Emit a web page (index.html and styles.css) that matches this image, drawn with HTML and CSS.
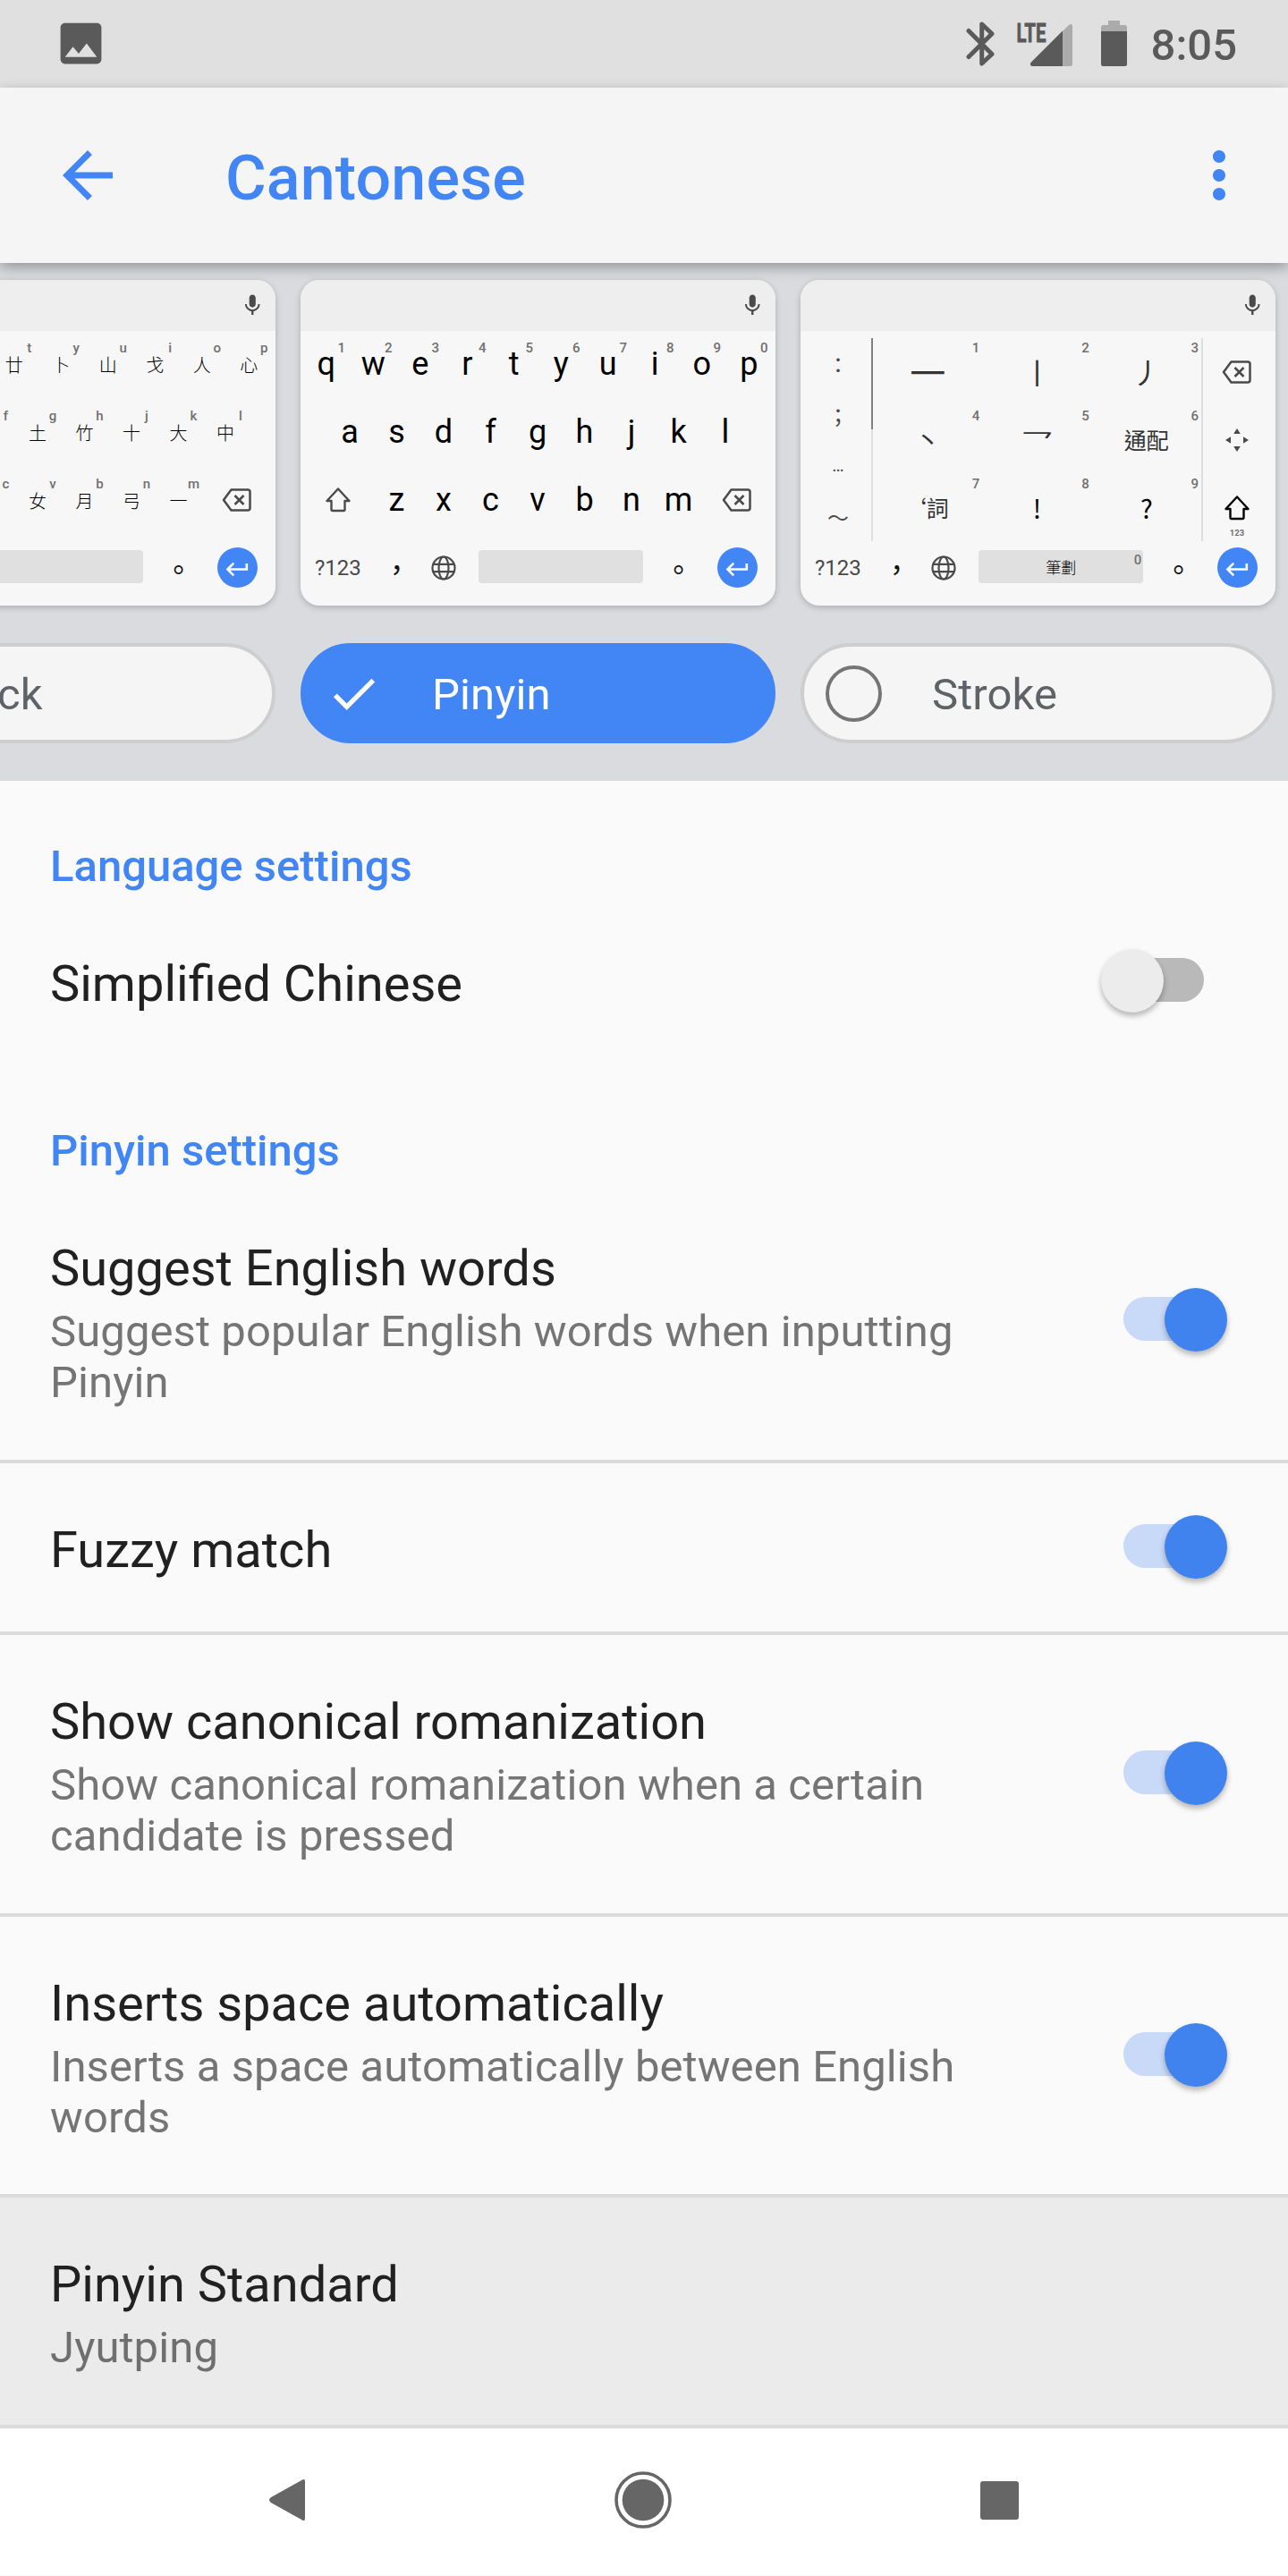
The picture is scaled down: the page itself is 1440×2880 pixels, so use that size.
FILE: index.html
```html
<!DOCTYPE html>
<html lang="en">
<head>
<meta charset="utf-8">
<title>Cantonese</title>
<link rel="stylesheet" href="styles.css">
</head>
<body>
<svg class="defs" width="0" height="0" aria-hidden="true">
  <symbol id="mic" viewBox="0 0 24 24"><path d="M12 14c1.66 0 2.99-1.34 2.99-3L15 5c0-1.66-1.34-3-3-3S9 3.340 9 5v6c0 1.660 1.340 3 3 3zm5.300-3c0 3-2.540 5.100-5.300 5.100S6.700 14 6.700 11H5c0 3.410 2.720 6.230 6 6.720V21h2v-3.280c3.280-.480 6-3.300 6-6.720h-1.700z"/></symbol>
  <symbol id="backspace" viewBox="0 0 34 28"><path d="M10.500 2.500H29a2.500 2.500 0 0 1 2.500 2.500v18a2.500 2.500 0 0 1-2.500 2.500H10.500L2 14z M14.500 9l10 10M24.500 9l-10 10" fill="none" stroke="currentColor" stroke-width="2.500" stroke-linejoin="round"/></symbol>
  <symbol id="shift" viewBox="0 0 30 29"><path d="M15 2.500L27.500 16H22.500V25.500a1.500 1.500 0 0 1-1.500 1.500H9a1.500 1.500 0 0 1-1.500-1.500V16H2.500z" fill="none" stroke="currentColor" stroke-width="2.400" stroke-linejoin="round"/></symbol>
  <symbol id="globe" viewBox="0 0 28 28"><g fill="none" stroke="currentColor" stroke-width="2.200"><circle cx="14" cy="14" r="12.500"/><ellipse cx="14" cy="14" rx="5.500" ry="12.500"/><path d="M2.500 9.800h23M2.500 18.200h23"/></g></symbol>
  <symbol id="enter" viewBox="0 0 24 24"><path d="M19 7v4H5.830l3.580-3.590L8 6l-6 6 6 6 1.410-1.410L5.830 13H21V7z"/></symbol>
</svg>

<header class="status">
  <svg class="status-image" viewBox="0 0 24 24"><path d="M21 19V5c0-1.100-.900-2-2-2H5c-1.100 0-2 .900-2 2v14c0 1.100.900 2 2 2h14c1.100 0 2-.900 2-2zM8.500 13.500l2.500 3.010L14.500 12l4.500 6H5l3.500-4.500z"/></svg>
  <div class="status-right">
    <svg width="32" height="98" viewBox="1080 0 32 98"><path d="M1083 34.500L1109 60.500L1097.700 71V27L1109 37.700L1083 63.500" fill="none" stroke="#5a5a5a" stroke-width="5" stroke-linejoin="round" stroke-linecap="round"/></svg>
    <svg width="64" height="98" viewBox="1136 0 64 98">
      <path d="M1155 74a2.500 2.500 0 0 1-2-4.500L1195 28q4-2.500 4 2V71.500a2.500 2.500 0 0 1-2.500 2.500z" fill="#ababab"/>
      <path d="M1155 74a2.500 2.500 0 0 1-2-4.500L1188 34.500V74z" fill="#5a5a5a"/>
      <text x="1136.500" y="46.500" class="lte" textLength="33" lengthAdjust="spacingAndGlyphs">LTE</text>
    </svg>
    <svg width="29" height="98" viewBox="1231 0 29 98"><path d="M1231 36V30.500a2.500 2.500 0 0 1 2.500-2.500H1239V23h13v5h5.500a2.500 2.500 0 0 1 2.500 2.500V36z" fill="#ababab"/><path d="M1231 35h29V71.500a2.500 2.500 0 0 1-2.500 2.500h-24a2.500 2.500 0 0 1-2.500-2.500z" fill="#5a5a5a"/></svg>
    <span class="clock">8:05</span>
  </div>
</header>

<div class="appbar">
  <svg class="nav-icon" viewBox="0 0 24 24"><path d="M20 11H7.830l5.590-5.590L12 4l-8 8 8 8 1.410-1.410L7.830 13H20v-2z"/></svg>
  <h1>Cantonese</h1>
  <svg class="nav-icon" viewBox="0 0 24 24"><path d="M12 8c1.100 0 2-.900 2-2s-.900-2-2-2-2 .900-2 2 .900 2 2 2zm0 2c-1.100 0-2 .900-2 2s.900 2 2 2 2-.900 2-2-.900-2-2-2zm0 6c-1.100 0-2 .900-2 2s.900 2 2 2 2-.900 2-2-.900-2-2-2z"/></svg>
</div>

<section class="layouts">
  <div class="strip">
    <div class="option">
      <div class="keyboard han">
        <div class="kb-top"><svg class="mic"><use href="#mic"/></svg></div>
        <div class="kb-row"><span class="key"></span><span class="key"></span><span class="key"></span><span class="key"></span><span class="key">廿<i>t</i></span><span class="key">卜<i>y</i></span><span class="key">山<i>u</i></span><span class="key">戈<i>i</i></span><span class="key">人<i>o</i></span><span class="key">心<i>p</i></span></div>
        <div class="kb-row"><span class="key"></span><span class="key"></span><span class="key"></span><span class="key"><i>f</i></span><span class="key">土<i>g</i></span><span class="key">竹<i>h</i></span><span class="key">十<i>j</i></span><span class="key">大<i>k</i></span><span class="key">中<i>l</i></span></div>
        <div class="kb-row"><span class="key wide"></span><span class="key"></span><span class="key"></span><span class="key"><i>c</i></span><span class="key">女<i>v</i></span><span class="key">月<i>b</i></span><span class="key">弓<i>n</i></span><span class="key">一<i>m</i></span><span class="key wide"><svg class="backspace"><use href="#backspace"/></svg></span></div>
        <div class="kb-row bottom"><span class="key wide"></span><span class="key"></span><span class="key"></span><span class="space"></span><span class="key punct">。</span><span class="key wide"><span class="enter"><svg><use href="#enter"/></svg></span></span></div>
      </div>
      <div class="chip"><span class="radio"></span>Quick</div>
    </div>

    <div class="option">
      <div class="keyboard latin">
        <div class="kb-top"><svg class="mic"><use href="#mic"/></svg></div>
        <div class="kb-row"><span class="key">q<i>1</i></span><span class="key">w<i>2</i></span><span class="key">e<i>3</i></span><span class="key">r<i>4</i></span><span class="key">t<i>5</i></span><span class="key">y<i>6</i></span><span class="key">u<i>7</i></span><span class="key">i<i>8</i></span><span class="key">o<i>9</i></span><span class="key">p<i>0</i></span></div>
        <div class="kb-row"><span class="key">a</span><span class="key">s</span><span class="key">d</span><span class="key">f</span><span class="key">g</span><span class="key">h</span><span class="key">j</span><span class="key">k</span><span class="key">l</span></div>
        <div class="kb-row"><span class="key wide"><svg class="shift"><use href="#shift"/></svg></span><span class="key">z</span><span class="key">x</span><span class="key">c</span><span class="key">v</span><span class="key">b</span><span class="key">n</span><span class="key">m</span><span class="key wide"><svg class="backspace"><use href="#backspace"/></svg></span></div>
        <div class="kb-row bottom"><span class="key wide symbols">?123</span><span class="key punct">，</span><span class="key"><svg class="globe"><use href="#globe"/></svg></span><span class="space"></span><span class="key punct">。</span><span class="key wide"><span class="enter"><svg><use href="#enter"/></svg></span></span></div>
      </div>
      <div class="chip selected"><svg class="check" viewBox="0 0 24 24"><path d="M9 16.170L4.830 12l-1.420 1.410L9 19 21 7l-1.410-1.410z"/></svg>Pinyin</div>
    </div>

    <div class="option">
      <div class="keyboard strokes">
        <div class="kb-top"><svg class="mic"><use href="#mic"/></svg></div>
        <div class="pad">
          <div class="marks"><span>：</span><span>；</span><span class="dots">…</span><span>～</span></div>
          <div class="scroll"><span></span></div>
          <div class="cells">
            <span class="cell stroke-h">一<i>1</i></span><span class="cell stroke">丨<i>2</i></span><span class="cell stroke">丿<i>3</i></span>
            <span class="cell dot">丶<i>4</i></span><span class="cell turn"><em>乛</em><i>5</i></span><span class="cell">通配<i>6</i></span>
            <span class="cell word">‘詞<i>7</i></span><span class="cell mark">!<i>8</i></span><span class="cell mark">?<i>9</i></span>
          </div>
          <div class="side">
            <span class="cell"><svg class="backspace"><use href="#backspace"/></svg></span>
            <span class="cell"><svg class="dpad" viewBox="0 0 26 26"><path d="M13 0l3.800 6H9.200zM13 26l3.800-6H9.200zM0 13l6-3.800v7.600zM26 13l-6-3.800v7.600z"/></svg></span>
            <span class="cell dark"><svg class="shift"><use href="#shift"/></svg><b>123</b></span>
          </div>
        </div>
        <div class="kb-row bottom"><span class="key wide symbols">?123</span><span class="key punct">，</span><span class="key"><svg class="globe"><use href="#globe"/></svg></span><span class="space">筆劃<i>0</i></span><span class="key punct">。</span><span class="key wide"><span class="enter"><svg><use href="#enter"/></svg></span></span></div>
      </div>
      <div class="chip"><span class="radio"></span>Stroke</div>
    </div>
  </div>
</section>

<main>
  <h2>Language settings</h2>
  <div class="row plain"><div class="label"><p class="title">Simplified Chinese</p></div><span class="switch"></span></div>
  <h2>Pinyin settings</h2>
  <div class="row"><div class="label"><p class="title">Suggest English words</p><p class="sub">Suggest popular English words when inputting Pinyin</p></div><span class="switch on"></span></div>
  <div class="row"><div class="label"><p class="title">Fuzzy match</p></div><span class="switch on"></span></div>
  <div class="row"><div class="label"><p class="title">Show canonical romanization</p><p class="sub">Show canonical romanization when a certain candidate is pressed</p></div><span class="switch on"></span></div>
  <div class="row"><div class="label"><p class="title">Inserts space automatically</p><p class="sub">Inserts a space automatically between English words</p></div><span class="switch on"></span></div>
  <div class="row pressed"><div class="label"><p class="title">Pinyin Standard</p><p class="sub">Jyutping</p></div></div>
</main>

<nav class="navbar">
  <svg width="42" height="48" viewBox="0 0 42 48"><path d="M38 1.500q3-1.500 3 1.500v42q0 3-3 1.500L3 27q-4-3 0-6z"/></svg>
  <svg width="64" height="64" viewBox="0 0 64 64"><circle cx="32" cy="32" r="30" fill="none" stroke="#666" stroke-width="3.600"/><circle cx="32" cy="32" r="23.300"/></svg>
  <svg width="43" height="43" viewBox="0 0 43 43"><rect width="43" height="43" rx="3"/></svg>
</nav>
</body>
</html>
```
FILE: styles.css
```css
* { box-sizing: border-box; }
body {
  margin: 0;
  width: 1440px;
  height: 2880px;
  overflow: hidden;
  background: #fafafa;
  font-family: Roboto, "Noto Sans CJK TC", sans-serif;
  color: #212121;
}
h1, h2, p { margin: 0; }
i, em { font-style: normal; }
svg { display: block; flex: none; }
.defs { position: absolute; }

/* Status bar */
.status {
  height: 98px;
  background: #e0e0e0;
  display: flex;
  justify-content: space-between;
  align-items: flex-start;
  padding: 0 57px 0 60px;
}
.status-image { width: 61px; height: 61px; margin-top: 18px; fill: #5a5a5a; }
.status-right { display: flex; }
.status-right svg:nth-child(1) { margin-right: 24px; }
.status-right svg:nth-child(2) { margin-right: 31px; }
.status-right svg:nth-child(3) { margin-right: 27px; }
.lte { font: 700 30px Roboto, sans-serif; fill: #5a5a5a; stroke: #5a5a5a; stroke-width: .8px; }
.clock { font-size: 49px; font-weight: 500; line-height: 58px; padding-top: 22px; color: #5a5a5a; }

/* App bar */
.appbar {
  position: relative;
  z-index: 1;
  height: 196px;
  background: #f5f5f5;
  display: flex;
  align-items: center;
  padding: 0 35px 0 56px;
  box-shadow: 0 5px 14px rgba(0, 0, 0, .32);
}
.nav-icon { width: 84px; height: 84px; fill: #4285f4; }
.appbar h1 {
  flex: 1;
  padding: 5px 0 0 112px;
  font-size: 70px;
  font-weight: 500;
  line-height: 82px;
  letter-spacing: .15px;
  color: #4285f4;
}

/* Layout carousel */
.layouts { height: 579px; background: #dadbdf; overflow: hidden; }
.strip { display: flex; gap: 28px; margin-left: -223px; padding-top: 19px; width: 1663px; }
.option { width: 531px; flex: none; }
.keyboard {
  height: 364px;
  border-radius: 21px;
  background: #f7f7f7;
  overflow: hidden;
  box-shadow: 0 2px 7px rgba(0, 0, 0, .22);
  color: #000;
}
.kb-top {
  height: 57px;
  background: #eee;
  display: flex;
  justify-content: flex-end;
  padding: 14px 12px 0 0;
}
.mic { width: 28.5px; height: 28.5px; fill: #4a4a4a; }
.kb-row { height: 76px; display: flex; justify-content: center; align-items: center; padding-right: 1px; }
.key {
  position: relative;
  width: 52.5px;
  height: 76px;
  display: flex;
  align-items: center;
  justify-content: center;
}
.key.wide { width: 78.75px; color: #4a4a4a; }
.key i {
  position: absolute;
  top: 10px;
  left: calc(50% + 17px);
  transform: translateX(-50%);
}
.keyboard i {
  font: 500 15px/18px Roboto, sans-serif;
  color: #707070;
}
.latin .key { font-size: 36px; padding-bottom: 3px; }
.han .key { font-size: 20px; padding-bottom: 2px; font-family: "Noto Sans CJK TC", sans-serif; font-weight: 300; }
.keyboard .bottom .key { padding-bottom: 3px; }
.keyboard .symbols { font-size: 24px; font-weight: 400; padding-bottom: 0; }
.keyboard .key.punct { font-family: "Noto Sans CJK TC", sans-serif; font-size: 32px; font-weight: 400; line-height: 46px; color: #111; }
.backspace { width: 34px; height: 28px; color: #4a4a4a; }
.shift { width: 30px; height: 29px; }
.globe { width: 28px; height: 28px; color: #4a4a4a; }
.space {
  position: relative;
  width: 184px;
  height: 37px;
  margin: 0 13px 5px;
  border-radius: 4px;
  background: #e0e0e0;
  display: flex;
  align-items: center;
  justify-content: center;
  font: 300 17px "Noto Sans CJK TC", sans-serif;
}
.space i { position: absolute; top: 2px; right: 2px; }
.enter {
  width: 45px;
  height: 45px;
  border-radius: 50%;
  background: #4285f4;
  display: flex;
  justify-content: center;
  align-items: center;
  padding: 3px 0 0 1px;
}
.enter svg { width: 31px; height: 31px; fill: #fff; }

/* Stroke keypad */
.pad { height: 228px; display: flex; padding: 0 3px; }
.marks {
  width: 76px;
  padding-top: 8px;
  display: flex;
  flex-direction: column;
  align-items: center;
  font: 24px/57px "Noto Sans CJK TC", sans-serif;
  color: #4a4a4a;
}
.marks span { height: 57px; padding-left: 2px; }
.marks .dots { font-family: Roboto, sans-serif; font-size: 20px; }
.scroll { width: 2px; height: 227px; margin-top: 8px; background: #e0e0e0; }
.scroll span { display: block; height: 102px; background: #808080; }
.cells {
  flex: 1;
  display: grid;
  grid-template-columns: repeat(3, 1fr);
  grid-auto-rows: 76px;
}
.cell {
  position: relative;
  height: 76px;
  display: flex;
  align-items: center;
  justify-content: center;
  padding-top: 13px;
  font: 25px/36px "Noto Sans CJK TC", sans-serif;
  color: #333;
}
.cell i { position: absolute; top: 10px; right: 3px; }
.cell.stroke-h { font-size: 40px; }
.cell.stroke { font-size: 32px; }
.cell.dot { font-size: 28px; }
.cell.turn { font-size: 37px; }
.turn em { transform: scaleY(.6); }
.cell.word { padding-right: 3px; }
.cell.mark { font-size: 29px; color: #000; }
.side { width: 80px; height: 227px; border-left: 2px solid #ddd; margin-top: 8px; }
.side .cell { margin-top: -8px; margin-bottom: 8px; padding-top: 15px; padding-right: 2px; }
.side .cell + .cell { margin-top: -8px; }
.side .dark { color: #000; }
.side b { position: absolute; top: 68px; font: 700 9.5px/12px Roboto, sans-serif; color: #707070; }
.dpad { width: 26px; height: 26px; fill: #4a4a4a; }

/* Layout chips */
.chip {
  height: 112px;
  margin-top: 42px;
  border: 4px solid #cdcecd;
  border-radius: 56px;
  background: #f5f5f5;
  display: flex;
  align-items: center;
  gap: 56px;
  padding: 2px 0 0 24px;
  font-size: 49px;
  letter-spacing: .1px;
  color: #5f6368;
}
.chip.selected { background: #4285f4; border-color: #4285f4; color: #fff; }
.radio { width: 63px; height: 63px; border: 4px solid #757575; border-radius: 50%; margin-top: -2px; }
.check { width: 63px; height: 63px; fill: #fff; margin-top: -2px; }

/* Settings list */
h2 {
  height: 130px;
  padding: 67px 56px 0;
  font-size: 49px;
  font-weight: 500;
  line-height: 57px;
  color: #4285f4;
}
.row {
  display: flex;
  align-items: center;
  justify-content: space-between;
  padding: 0 56px;
  border-bottom: 4px solid #dbdbdb;
}
.row.plain { border-bottom: 0; }
.label { width: 1100px; padding: 64px 0 58px; }
.title { font-size: 56px; line-height: 66px; }
.sub { margin-top: 9px; font-size: 49px; line-height: 57.4px; letter-spacing: .09px; color: #757575; }
.label:has(.sub) { padding-bottom: 57px; }
.pressed { background: #ebebeb; }
.pressed .sub { color: #6f6f6f; }
.switch {
  position: relative;
  flex: none;
  width: 90px;
  height: 49px;
  margin: -3px 38px 0 0;
  border-radius: 25px;
  background: #b9b9b9;
}
.switch::after {
  content: "";
  position: absolute;
  top: -10px;
  left: -25px;
  width: 70px;
  height: 71px;
  border-radius: 50%;
  background: #ececec;
  box-shadow: 0 4px 6px rgba(0, 0, 0, .28);
}
.switch.on { background: #c8daf8; }
.switch.on::after { left: 46px; background: #4083ef; }

/* System navigation */
.navbar {
  height: 164px;
  background: #fff;
  display: grid;
  grid-template-columns: 42px 64px 43px;
  column-gap: 345px;
  justify-content: start;
  align-items: center;
  padding: 0 0 3px 300px;
  fill: #666;
}
```
